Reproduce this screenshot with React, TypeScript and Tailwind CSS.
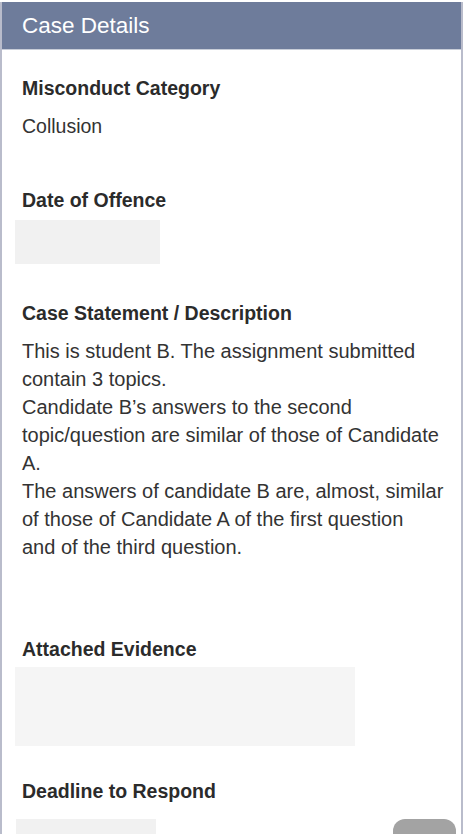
export default function App() {
  // lines broken as shown in the reference
  const statement = [
    ["This is student B. The assignment submitted", "contain 3 topics."],
    ["Candidate B\u2019s answers to the second", "topic/question are similar of those of Candidate", "A."],
    ["The answers of candidate B are, almost, similar", "of those of Candidate A of the first question", "and of the third question."],
  ];

  return (
    <div
      className="w-[465px] h-[834px] overflow-hidden bg-white pt-[2px] pr-[2px]"
      style={{ fontFamily: '"Liberation Sans", Arial, sans-serif' }}
    >
      <div className="h-[900px] border-x-2 border-[#b9bccb] bg-white">
        {/* Header */}
        <div className="h-[48px] bg-[#6e7c9b] border-b border-[#c8cdd8] flex items-center px-5">
          <h1 className="text-[22.5px] text-white">Case Details</h1>
        </div>

        <div className="pl-5 pr-3 pt-[25px] text-[#2b2b2b]">
          <h2 className="text-[19.5px] font-bold leading-[26px]">Misconduct Category</h2>
          <p className="mt-[12px] text-[19.5px] leading-[26px] text-[#333]">Collusion</p>

          <h2 className="mt-[48px] text-[19.5px] font-bold leading-[26px]">Date of Offence</h2>
          <div className="mt-[7px] -ml-[7px] w-[145px] h-[44px] bg-[#f1f1f1]" />

          <h2 className="mt-[36px] text-[19.5px] font-bold leading-[26px]">Case Statement / Description</h2>
          <div className="mt-[11px] text-[20px] leading-[28px] text-[#333]">
            {statement.map((lines, i) => (
              <p key={i}>
                {lines.map((l, j) => (
                  <span key={j} className="block">
                    {l}
                  </span>
                ))}
              </p>
            ))}
          </div>

          <h2 className="mt-[75px] text-[19.5px] font-bold leading-[26px]">Attached Evidence</h2>
          <div className="mt-[5px] -ml-[7px] w-[340px] h-[79px] bg-[#f5f5f5]" />

          <h2 className="mt-[32px] text-[19.5px] font-bold leading-[26px]">Deadline to Respond</h2>
          <div className="mt-[15px] -ml-[6px] flex items-start justify-between">
            <div className="w-[140px] h-[40px] bg-[#f1f1f1]" />
            <div className="w-[63px] h-[40px] mr-[-7px] rounded-t-[12px] bg-[#a3a3a3]" />
          </div>
        </div>
      </div>
    </div>
  );
}
